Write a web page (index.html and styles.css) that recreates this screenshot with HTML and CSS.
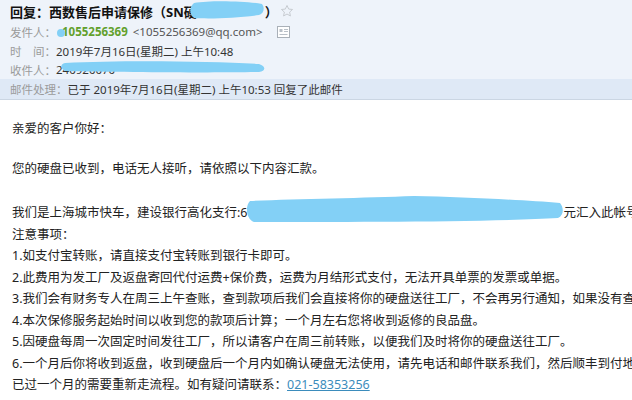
FILE: index.html
```html
<!DOCTYPE html>
<html lang="zh-CN">
<head>
    <meta charset="UTF-8">
    <title>回复：西数售后申请保修</title>
    <link rel="stylesheet" href="styles.css">
</head>
<body>
    <div class="mail">
        <div class="mail-head">
            <div class="subject">
                <span>回复：西数售后申请保修（SN硬</span>
                <svg class="mask-subject" width="76" height="20" viewBox="0 0 76 20"><path d="M5 3 C22 0 56 1 73 4 C76 8 75 13 70 15 C48 18 22 19 5 18 C0 14 0 7 5 3Z" fill="#83d0f6"/></svg>
                <span>）</span>
                <svg class="star" width="14" height="14" viewBox="0 0 24 24"><path d="M12 2.5l2.9 6.2 6.6.7-5 4.5 1.4 6.6L12 17.2l-5.9 3.3 1.4-6.6-5-4.5 6.6-.7z" fill="none" stroke="#c4c8ce" stroke-width="1.6" stroke-linejoin="round"/></svg>
            </div>
            <div class="meta-row">
                <span class="label">发件人：</span>
                <span class="dot"></span>
                <span class="sender">1055256369</span>
                <span class="addr">&lt;1055256369@qq.com&gt;</span>
                <svg class="card-icon" width="13" height="12" viewBox="0 0 13 12"><rect x="0.5" y="0.5" width="12" height="11" fill="#fff" stroke="#a9b0b8"/><rect x="2.5" y="3" width="3" height="3" fill="#b9c0c8"/><path d="M7 3.5h4M7 5.5h4M2.5 8.5h8" stroke="#b9c0c8"/></svg>
            </div>
            <div class="meta-row">
                <span class="label">时　间：</span>
                <span>2019年7月16日(星期二) 上午10:48</span>
            </div>
            <div class="meta-row to-row">
                <span class="label">收件人：</span>
                <span>240920070</span>
                <svg class="mask-to" width="206" height="14" viewBox="0 0 206 14"><path d="M5 3 C60 0 150 1 199 4 C206 6 206 11 199 12 C150 13 60 12 6 11 C0 9 0 4 5 3Z" fill="#83d0f6"/></svg>
            </div>
        </div>
        <div class="mail-status">
            <span class="label">邮件处理：</span>
            <span>已于 2019年7月16日(星期二) 上午10:53 回复了此邮件</span>
        </div>

        <div class="mail-body">
            <p class="greeting">亲爱的客户你好：</p>
            <p class="notice">您的硬盘已收到，电话无人接听，请依照以下内容汇款。</p>
            <p>我们是上海城市快车，建设银行高化支行:6<svg class="mask-bank" width="320" height="21" viewBox="0 0 320 21"><path d="M6 -1 C50 -3 120 -4 170 -6 C220 -5 280 -2 316 1 C320 6 320 13 314 16 C250 20 100 20 10 20 C2 17 1 4 6 -1Z" fill="#83d0f6"/></svg>元汇入此帐号</p>
            <p>注意事项：</p>
            <p>1.如支付宝转账，请直接支付宝转账到银行卡即可。</p>
            <p>2.此费用为发工厂及返盘寄回代付运费+保价费，运费为月结形式支付，无法开具单票的发票或单据。</p>
            <p>3.我们会有财务专人在周三上午查账，查到款项后我们会直接将你的硬盘送往工厂，不会再另行通知，如果没有查到款项</p>
            <p>4.本次保修服务起始时间以收到您的款项后计算；一个月左右您将收到返修的良品盘。</p>
            <p>5.因硬盘每周一次固定时间发往工厂，所以请客户在周三前转账，以便我们及时将你的硬盘送往工厂。</p>
            <p>6.一个月后你将收到返盘，收到硬盘后一个月内如确认硬盘无法使用，请先电话和邮件联系我们，然后顺丰到付地址</p>
            <p>已过一个月的需要重新走流程。如有疑问请联系：<a class="phone" href="#">021-58353256</a></p>
        </div>
    </div>
</body>
</html>
```

FILE: styles.css
```css
body {
    margin: 0;
    background: #fff;
    font-family: "Noto Sans", "Noto Sans CJK SC", sans-serif;
    color: #222;
    overflow: hidden;
}
.mail {
    width: 632px;
    height: 400px;
    overflow: hidden;
}
.mail-head {
    background: #eef3fa;
    padding: 0 10px;
}
.subject {
    height: 22px;
    display: flex;
    align-items: center;
    font-size: 13px;
    font-weight: bold;
    color: #111;
    white-space: nowrap;
}
.mask-subject {
    margin-left: -8px;
    margin-top: -2px;
}
.star {
    margin-left: 2px;
}
.meta-row {
    position: relative;
    height: 19px;
    display: flex;
    align-items: center;
    font-size: 11.5px;
    color: #333;
    white-space: nowrap;
}
.label {
    color: #9b9b9b;
}
.dot {
    width: 8px;
    height: 8px;
    border-radius: 50%;
    background: #83d0f6;
    margin: 0 -3px -3px 1px;
    position: relative;
    z-index: 1;
}
.sender {
    color: #62a02c;
    font-weight: bold;
    margin-right: 5px;
}
.addr {
    color: #555;
}
.card-icon {
    margin-left: 14px;
}
.mask-to {
    position: absolute;
    left: 50px;
    top: 0;
}
.mail-status {
    height: 20px;
    display: flex;
    align-items: center;
    padding: 0 10px;
    background: #dfe9f6;
    border-bottom: 1px solid #cbd6e3;
    font-size: 11.5px;
    color: #333;
    white-space: nowrap;
}
.mail-body {
    padding: 18px 12px 0;
    font-size: 12.5px;
    line-height: 21.5px;
    color: #222;
    white-space: nowrap;
}
.mail-body p {
    margin: 0;
}
.mail-body p.greeting {
    margin-bottom: 18.5px;
}
.mail-body p.notice {
    margin-bottom: 22.5px;
}
.mask-bank {
    vertical-align: top;
    overflow: visible;
    margin-left: -4px;
}
.phone {
    color: #3b8cbc;
    text-decoration: underline;
}
```
